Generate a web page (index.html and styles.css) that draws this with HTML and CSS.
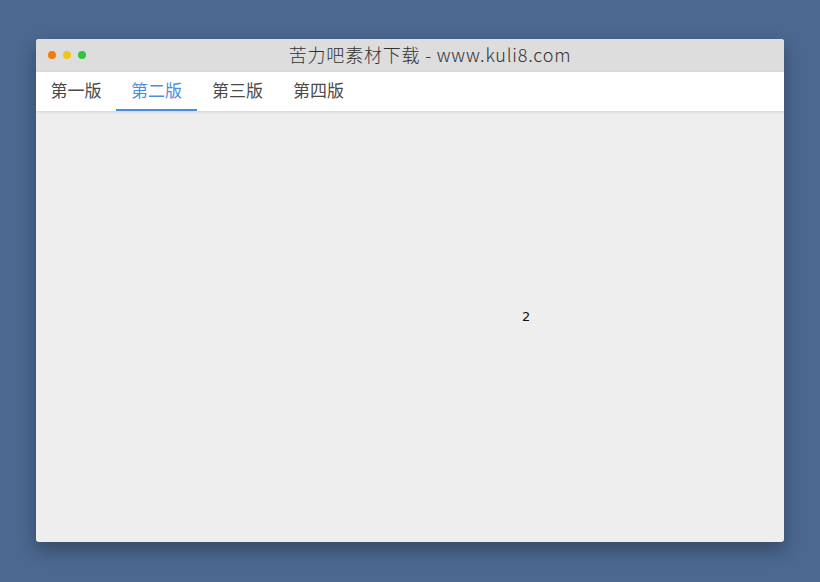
FILE: index.html
```html
<!DOCTYPE html>
<html lang="zh-CN">
<head>
  <meta charset="UTF-8">
  <title>苦力吧素材下载</title>
  <link rel="stylesheet" href="styles.css">
</head>
<body>
  <div class="window">
    <div class="titlebar">
      <div class="dots">
        <span class="dot dot-red"></span>
        <span class="dot dot-yellow"></span>
        <span class="dot dot-green"></span>
      </div>
      <div class="title">苦力吧素材下载 - www.kuli8.com</div>
    </div>
    <div class="tabs">
      <div class="tab">第一版</div>
      <div class="tab active">第二版</div>
      <div class="tab">第三版</div>
      <div class="tab">第四版</div>
    </div>
    <div class="content">
      <div class="slide">2</div>
    </div>
  </div>
</body>
</html>
```

FILE: styles.css
```css
* {
  margin: 0;
  padding: 0;
  box-sizing: border-box;
}

body {
  width: 820px;
  height: 582px;
  background: #4b6890;
  font-family: "Noto Sans CJK SC", "Noto Sans", sans-serif;
  padding: 39px 36px 0;
  overflow: hidden;
}

.window {
  width: 748px;
  height: 503px;
  background: #eeeeee;
  border-radius: 3px;
  box-shadow: 0 8px 18px rgba(0, 0, 0, 0.3);
  display: flex;
  flex-direction: column;
  overflow: hidden;
}

.titlebar {
  height: 33px;
  background: #dddddd;
  position: relative;
  display: flex;
  align-items: center;
  justify-content: center;
  padding-bottom: 3px;
}

.dots {
  position: absolute;
  left: 12px;
  top: 12px;
  display: flex;
  gap: 7px;
}

.dot {
  width: 8px;
  height: 8px;
  border-radius: 50%;
}

.dot-red { background: #f57c00; }
.dot-yellow { background: #f0c419; }
.dot-green { background: #2fc63f; }

.title {
  font-size: 18px;
  color: #333;
  font-weight: 300;
  letter-spacing: 0.8px;
  margin-left: 40px;
}

.tabs {
  height: 39px;
  background: #fff;
  display: flex;
  box-shadow: 0 1px 3px rgba(0, 0, 0, 0.12);
  position: relative;
}

.tab {
  width: 81px;
  font-size: 17px;
  color: #4a4a4a;
  display: flex;
  align-items: center;
  justify-content: center;
  border-bottom: 2px solid transparent;
  padding-bottom: 2px;
}

.tab:first-child {
  width: 80px;
}

.active {
  color: #4a8ee0;
  border-bottom-color: #4a8ee0;
}

.content {
  flex: 1;
  padding: 198px 0 0 486px;
}

.slide {
  font-size: 13px;
  color: #111;
  font-family: "DejaVu Sans", sans-serif;
}
```
